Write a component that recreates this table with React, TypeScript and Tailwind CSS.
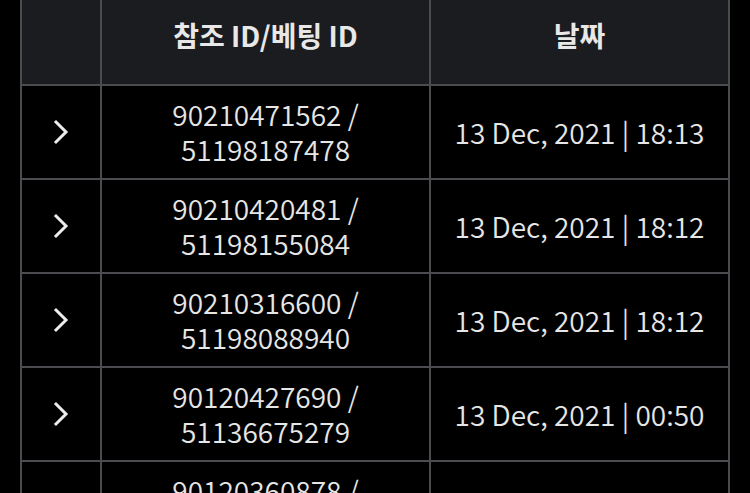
const rows = [
  { ref: '90210471562', bet: '51198187478', date: '13 Dec, 2021 | 18:13' },
  { ref: '90210420481', bet: '51198155084', date: '13 Dec, 2021 | 18:12' },
  { ref: '90210316600', bet: '51198088940', date: '13 Dec, 2021 | 18:12' },
  { ref: '90120427690', bet: '51136675279', date: '13 Dec, 2021 | 00:50' },
  { ref: '90120360878', bet: '51136621034', date: '13 Dec, 2021 | 00:49' },
];

function Chevron() {
  return (
    <svg width="16" height="26" viewBox="0 0 16 26" fill="none" className="text-[#ececec]">
      <polyline points="3,3 13,13 3,23" stroke="currentColor" strokeWidth="3" strokeLinecap="square" />
    </svg>
  );
}

export default function App() {
  return (
    <div
      className="h-[493px] w-[750px] overflow-hidden bg-black px-5 text-[#e6e6e6]"
      style={{ fontFamily: '"Noto Sans CJK KR", "Noto Sans", sans-serif' }}
    >
      <div className="grid grid-cols-[80px_329px_299px] border-l-2 border-[#4b4c50] text-[28px] leading-[35px]">
        <div className="h-[86px] border-r-2 border-b-2 border-[#4b4c50] bg-[#1b1c20]" />
        <div className="h-[86px] border-r-2 border-b-2 border-[#4b4c50] bg-[#1b1c20] pt-[18px] text-center font-bold text-[#e8e8e8]">
          참조 ID/베팅 ID
        </div>
        <div className="h-[86px] border-r-2 border-b-2 border-[#4b4c50] bg-[#1b1c20] pt-[18px] text-center font-bold text-[#e8e8e8]">
          날짜
        </div>

        {rows.map((row) => (
          <div key={row.ref} className="contents font-[350]">
            <div className="flex h-[94px] items-center justify-center border-r-2 border-b-2 border-[#4b4c50]">
              <Chevron />
            </div>
            <div className="flex h-[94px] flex-col items-center justify-center border-r-2 border-b-2 border-[#4b4c50] text-center">
              <span>{row.ref} /</span>
              <span>{row.bet}</span>
            </div>
            <div className="flex h-[94px] items-center justify-center border-r-2 border-b-2 border-[#4b4c50]">
              {row.date}
            </div>
          </div>
        ))}
      </div>
    </div>
  );
}
